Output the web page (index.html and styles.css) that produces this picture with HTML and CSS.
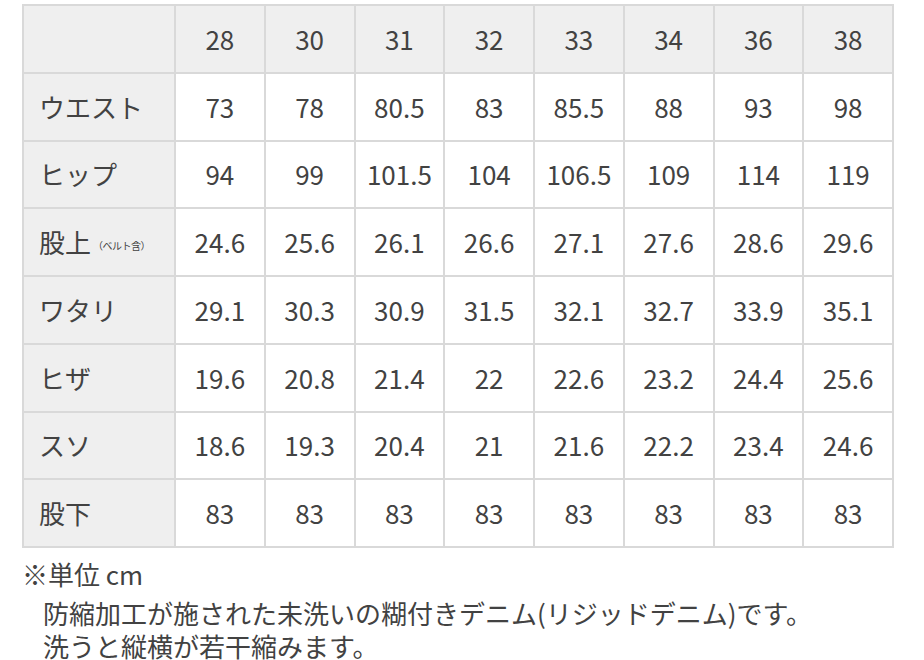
FILE: index.html
```html
<!DOCTYPE html>
<html lang="ja">
<head>
<meta charset="utf-8">
<title>サイズ表</title>
<link rel="stylesheet" href="styles.css">
</head>
<body>
<table class="size-table">
  <colgroup>
    <col class="col-label">
    <col span="8" class="col-size">
  </colgroup>
  <thead>
    <tr class="head-row">
      <th class="label"></th>
      <th>28</th><th>30</th><th>31</th><th>32</th><th>33</th><th>34</th><th>36</th><th>38</th>
    </tr>
  </thead>
  <tbody>
    <tr><th class="label">ウエスト</th><td>73</td><td>78</td><td>80.5</td><td>83</td><td>85.5</td><td>88</td><td>93</td><td>98</td></tr>
    <tr><th class="label">ヒップ</th><td>94</td><td>99</td><td>101.5</td><td>104</td><td>106.5</td><td>109</td><td>114</td><td>119</td></tr>
    <tr><th class="label">股上<span class="note">（ベルト含）</span></th><td>24.6</td><td>25.6</td><td>26.1</td><td>26.6</td><td>27.1</td><td>27.6</td><td>28.6</td><td>29.6</td></tr>
    <tr><th class="label">ワタリ</th><td>29.1</td><td>30.3</td><td>30.9</td><td>31.5</td><td>32.1</td><td>32.7</td><td>33.9</td><td>35.1</td></tr>
    <tr><th class="label">ヒザ</th><td>19.6</td><td>20.8</td><td>21.4</td><td>22</td><td>22.6</td><td>23.2</td><td>24.4</td><td>25.6</td></tr>
    <tr><th class="label">スソ</th><td>18.6</td><td>19.3</td><td>20.4</td><td>21</td><td>21.6</td><td>22.2</td><td>23.4</td><td>24.6</td></tr>
    <tr><th class="label">股下</th><td>83</td><td>83</td><td>83</td><td>83</td><td>83</td><td>83</td><td>83</td><td>83</td></tr>
  </tbody>
</table>
<div class="notes">
  <p class="unit">※単位 cm</p>
  <p class="desc">防縮加工が施された未洗いの糊付きデニム(リジッドデニム)です。<br>洗うと縦横が若干縮みます。</p>
</div>
</body>
</html>
```

FILE: styles.css
```css
html, body {
  margin: 0;
  padding: 0;
  background: #ffffff;
}

body {
  padding: 4px 0 0 22px;
  font-family: "Noto Sans CJK JP", "Noto Sans", sans-serif;
  color: #424242;
}

.size-table {
  border-collapse: collapse;
  table-layout: fixed;
  width: 872px;
}

.col-label {
  width: 152px;
}

.size-table th,
.size-table td {
  border: 2px solid #d9d9d9;
  height: 65.75px;
  padding: 0;
  font-size: 26px;
  font-weight: 400;
  text-align: center;
  vertical-align: middle;
  line-height: 1;
  color: #424242;
}

.head-row th,
.size-table .label {
  background: #efefef;
}

.size-table .label {
  text-align: left;
  padding-left: 15px;
  white-space: nowrap;
}

.note {
  font-size: 10px;
  margin-left: 2px;
  vertical-align: 3px;
  letter-spacing: -0.5px;
}

.notes {
  margin-top: 9px;
  font-size: 26px;
  line-height: 34px;
  color: #424242;
}

.notes .unit {
  margin: 0;
}

.notes .desc {
  margin: 5px 0 0;
  padding-left: 21px;
  line-height: 33px;
}
```
